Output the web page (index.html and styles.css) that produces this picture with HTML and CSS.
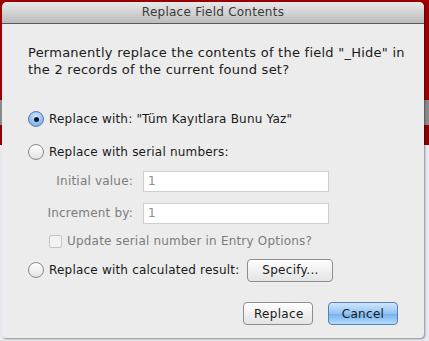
FILE: index.html
```html
<!DOCTYPE html>
<html lang="en">
<head>
    <meta charset="UTF-8">
    <title>Replace Field Contents</title>
    <link rel="stylesheet" href="styles.css">
</head>
<body>
    <div class="backdrop">
        <div class="dialog">
            <div class="titlebar">Replace Field Contents</div>

            <div class="content">
                <p class="question">Permanently replace the contents of the field "_Hide" in<br>the 2 records of the current found set?</p>

                <label class="option first">
                    <span class="radio checked"></span>
                    <span>Replace with: "Tüm Kayıtlara Bunu Yaz"</span>
                </label>

                <label class="option">
                    <span class="radio"></span>
                    <span>Replace with serial numbers:</span>
                </label>

                <div class="serial">
                    <div class="field-row">
                        <span class="field-label">Initial value:</span>
                        <span class="field-input">1</span>
                    </div>
                    <div class="field-row">
                        <span class="field-label">Increment by:</span>
                        <span class="field-input">1</span>
                    </div>
                    <div class="check-row">
                        <span class="checkbox"></span>
                        <span>Update serial number in Entry Options?</span>
                    </div>
                </div>

                <div class="option calc">
                    <span class="radio"></span>
                    <span class="calc-label">Replace with calculated result:</span>
                    <button class="btn specify">Specify...</button>
                </div>

                <div class="actions">
                    <button class="btn">Replace</button>
                    <button class="btn default">Cancel</button>
                </div>
            </div>
        </div>
    </div>
</body>
</html>
```

FILE: styles.css
```css
body {
    margin: 0;
    background-color: #9c0000;
    font-family: "DejaVu Sans", sans-serif;
    font-size: 12px;
    letter-spacing: 0.2px;
    color: #1a1a1a;
}

.backdrop {
    width: 429px;
    height: 341px;
    padding: 2px 0 0 2px;
    box-sizing: border-box;
    overflow: hidden;
    /* app window behind the sheet */
    background: linear-gradient(#9c0000 0, #9c0000 100px, #8a8a8a 100px, #8a8a8a 125px, #8c0000 125px, #8c0000 145px, #e8e8f0 145px);
}

.dialog {
    width: 422px;
    height: 336px;
    background-color: #ececec;
    border-radius: 5px 5px 4px 4px;
    box-shadow: 1px 1px 2px rgba(0, 0, 0, 0.4);
    overflow: hidden;
}

.titlebar {
    height: 21px;
    line-height: 21px;
    text-align: center;
    font-size: 12px;
    letter-spacing: 0.25px;
    color: #3a3a3a;
    background: linear-gradient(#e9e9e9, #bcbcbc);
    border-bottom: 1px solid #585858;
}

.content {
    padding: 20px 0 0 26px;
}

.question {
    margin: 0;
    white-space: nowrap;
    font-size: 13px;
    letter-spacing: 0.25px;
    line-height: 17px;
}

.option {
    display: flex;
    align-items: center;
    height: 20px;
    gap: 5px;
}

.option.first {
    margin-top: 31px;
}

.option + .option {
    margin-top: 13px;
}

.radio {
    flex-shrink: 0;
    width: 14px;
    height: 14px;
    border-radius: 50%;
    border: 1px solid #8a8a8a;
    background: linear-gradient(#ffffff, #e2e2e2);
    display: flex;
    align-items: center;
    justify-content: center;
}

.radio.checked {
    border-color: #5a7cae;
    background: radial-gradient(circle at 50% 35%, #d8ecff, #7fb4ea 70%);
}

.radio.checked::after {
    content: "";
    width: 5px;
    height: 5px;
    border-radius: 50%;
    background-color: #0a1a30;
}

.serial {
    padding-top: 8px;
}

.field-row {
    display: flex;
    align-items: center;
    height: 22px;
    margin-bottom: 10px;
}

.field-label {
    width: 105px;
    text-align: right;
    color: #7c7c7c;
}

.field-input {
    margin-left: 10px;
    width: 180px;
    height: 19px;
    line-height: 19px;
    padding-left: 4px;
    background-color: #ffffff;
    border: 1px solid #cfcfcf;
    color: #8a8a8a;
}

.check-row {
    display: flex;
    align-items: center;
    gap: 5px;
    margin: 1px 0 0 21px;
    color: #7c7c7c;
}

.checkbox {
    width: 11px;
    height: 11px;
    border: 1px solid #c4c4c4;
    border-radius: 2px;
    background-color: #f2f2f2;
}

.option.calc {
    margin-top: 12px;
}

.btn {
    font-family: inherit;
    font-size: 12px;
    letter-spacing: 0.3px;
    color: #1a1a1a;
    height: 23px;
    margin: 0;
    padding: 0 10px;
    border: 1px solid #8e8e8e;
    border-radius: 4px;
    background: linear-gradient(#ffffff, #f0f0f0 50%, #e4e4e4);
}

.specify {
    flex-shrink: 0;
    width: 86px;
    margin-left: 3px;
}

.actions {
    display: flex;
    justify-content: flex-end;
    gap: 15px;
    padding-right: 26px;
    margin-top: 22px;
}

.actions .btn {
    width: 70px;
}

.btn.default {
    border-color: #5b7eb6;
    background: linear-gradient(#cfe6fd, #94c4f3 50%, #6fb0ee 51%, #b7dcfc);
}
```
